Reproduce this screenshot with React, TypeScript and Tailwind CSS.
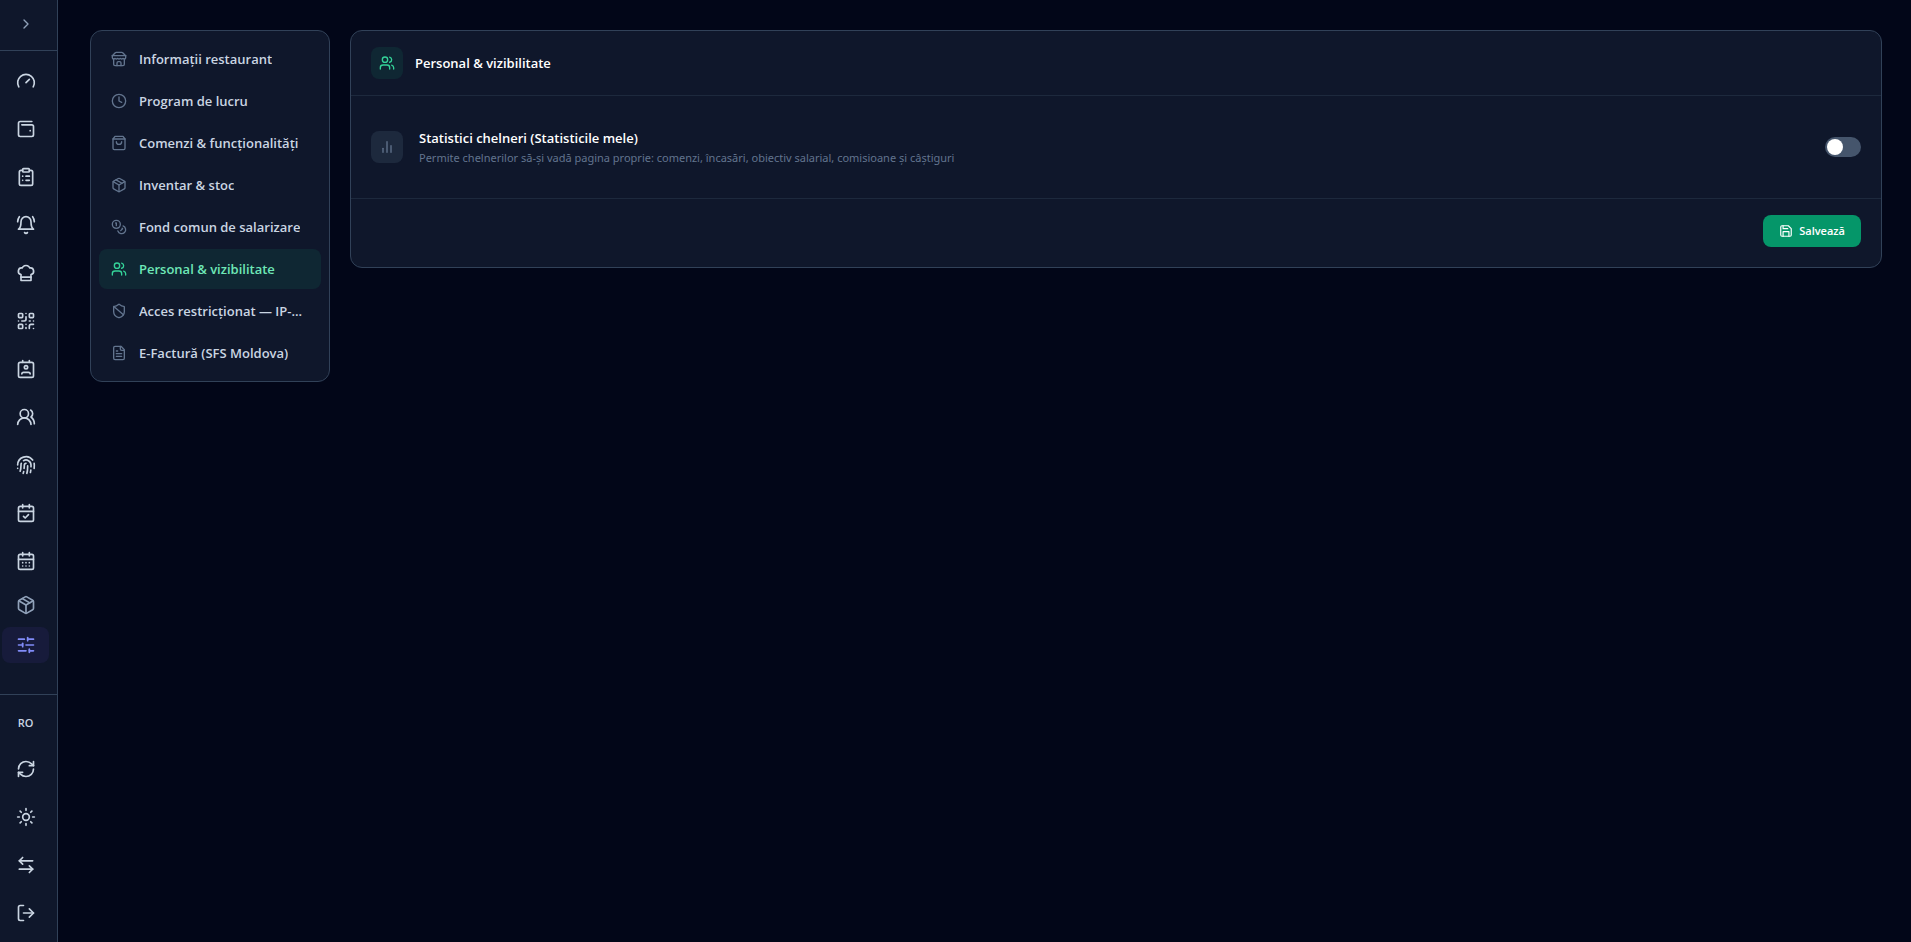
import { useState } from 'react';
import type { ReactNode } from 'react';
import {
  ArrowLeftRight, CalendarCheck, CalendarDays, ChevronRight, ClipboardList, Clock, Coins, Fingerprint,
  Gauge, LogOut, Package, QrCode, RefreshCw, ShieldBan, SlidersHorizontal, Sun, Users, UsersRound,
  WalletMinimal,
} from 'lucide-react';

interface IconProps { size?: number; className?: string }
type IconType = (props: IconProps) => ReactNode;
interface RailItem { label: string; icon: React.ComponentType<IconProps> }
interface Section { id: string; label: string; icon: React.ComponentType<IconProps> }

// Stroke icons that lucide has no matching shape for
function strokeIcon(...paths: string[]): IconType {
  return function StrokeIcon({ size = 24, className }: IconProps) {
    return (
      <svg
        width={size}
        height={size}
        viewBox="0 0 24 24"
        fill="none"
        stroke="currentColor"
        strokeWidth={2}
        strokeLinecap="round"
        strokeLinejoin="round"
        className={className}
        aria-hidden="true"
      >
        {paths.map((d) => <path key={d} d={d} />)}
      </svg>
    );
  };
}

const Bell = strokeIcon(
  'M6 8a6 6 0 0 1 12 0c0 7 3 9 3 9H3s3-2 3-9',
  'M10.3 21a1.94 1.94 0 0 0 3.4 0',
  'M4 2C2.8 3.7 2 5.7 2 8',
  'M22 8c0-2.3-.8-4.3-2-6',
);
const Hat = strokeIcon(
  'M6 13.87A4 4 0 0 1 7.41 6a5.11 5.11 0 0 1 1.05-1.54 5 5 0 0 1 7.08 0A5.11 5.11 0 0 1 16.59 6 4 4 0 0 1 18 13.87V21H6Z',
  'M6 17h12',
);
const Badge = strokeIcon(
  'M17 18a2 2 0 0 0-2-2H9a2 2 0 0 0-2 2',
  'M5 4h14a2 2 0 0 1 2 2v14a2 2 0 0 1-2 2H5a2 2 0 0 1-2-2V6a2 2 0 0 1 2-2z',
  'M10 10a2 2 0 1 0 4 0a2 2 0 1 0-4 0',
  'M8 2v2',
  'M16 2v2',
);
const Shop = strokeIcon(
  'm2 7 4.41-4.41A2 2 0 0 1 7.83 2h8.34a2 2 0 0 1 1.42.59L22 7',
  'M4 12v8a2 2 0 0 0 2 2h12a2 2 0 0 0 2-2v-8',
  'M15 22v-4a2 2 0 0 0-2-2h-2a2 2 0 0 0-2 2v4',
  'M2 7h20',
  'M22 7v3a2 2 0 0 1-2 2a2.7 2.7 0 0 1-1.59-.63.7.7 0 0 0-.82 0A2.7 2.7 0 0 1 16 12a2.7 2.7 0 0 1-1.59-.63.7.7 0 0 0-.82 0A2.7 2.7 0 0 1 12 12a2.7 2.7 0 0 1-1.59-.63.7.7 0 0 0-.82 0A2.7 2.7 0 0 1 8 12a2.7 2.7 0 0 1-1.59-.63.7.7 0 0 0-.82 0A2.7 2.7 0 0 1 4 12a2 2 0 0 1-2-2V7',
);
const Bag = strokeIcon('M6 2 3 6v14a2 2 0 0 0 2 2h14a2 2 0 0 0 2-2V6l-3-4Z', 'M3 6h18', 'M16 10a4 4 0 0 1-8 0');
const Invoice = strokeIcon(
  'M15 2H6a2 2 0 0 0-2 2v16a2 2 0 0 0 2 2h12a2 2 0 0 0 2-2V7Z',
  'M14 2v4a2 2 0 0 0 2 2h4',
  'M10 9H8',
  'M16 13H8',
  'M16 17H8',
);
const Bars = strokeIcon('M18 20V10', 'M12 20V4', 'M6 20v-6');
const Disk = strokeIcon(
  'M19 21H5a2 2 0 0 1-2-2V5a2 2 0 0 1 2-2h11l5 5v11a2 2 0 0 1-2 2z',
  'M17 21v-8H7v8',
  'M7 3v5h8',
);

const MAIN_ITEMS: RailItem[] = [
  { label: 'Panou',      icon: Gauge },
  { label: 'Casa',       icon: WalletMinimal },
  { label: 'Comenzi',    icon: ClipboardList },
  { label: 'Notificări', icon: Bell },
  { label: 'Bucătărie',  icon: Hat },
  { label: 'Coduri QR',  icon: QrCode },
  { label: 'Contacte',   icon: Badge },
  { label: 'Personal',   icon: UsersRound },
  { label: 'Pontaj',     icon: Fingerprint },
  { label: 'Rezervări',  icon: CalendarCheck },
  { label: 'Calendar',   icon: CalendarDays },
];

const FOOTER_ITEMS: RailItem[] = [
  { label: 'Reîncarcă',          icon: RefreshCw },
  { label: 'Temă',               icon: Sun },
  { label: 'Schimbă restaurant', icon: ArrowLeftRight },
  { label: 'Ieșire',             icon: LogOut },
];

const SECTIONS: Section[] = [
  { id: 'info',      label: 'Informații restaurant',        icon: Shop },
  { id: 'hours',     label: 'Program de lucru',             icon: Clock },
  { id: 'orders',    label: 'Comenzi & funcționalități',    icon: Bag },
  { id: 'inventory', label: 'Inventar & stoc',              icon: Package },
  { id: 'fund',      label: 'Fond comun de salarizare',     icon: Coins },
  { id: 'staff',     label: 'Personal & vizibilitate',      icon: Users },
  { id: 'access',    label: 'Acces restricționat — IP-...', icon: ShieldBan },
  { id: 'efactura',  label: 'E-Factură (SFS Moldova)',      icon: Invoice },
];

function RailLink({ label, children }: { label: string; children: ReactNode }) {
  return (
    <a href="#" aria-label={label} className="flex h-11 shrink-0 items-center justify-center rounded-lg text-slate-300 hover:bg-slate-800">
      {children}
    </a>
  );
}

function Rail() {
  return (
    <aside className="sticky top-0 flex h-screen w-[58px] shrink-0 flex-col border-r border-slate-700 bg-slate-900">
      <div className="flex h-[51px] shrink-0 items-start border-b border-slate-700 pt-2 pr-[5px]">
        <button aria-label="Extinde meniul" className="flex h-8 w-full items-center justify-center text-slate-400">
          <ChevronRight size={16} />
        </button>
      </div>

      <nav className="flex min-h-0 flex-1 flex-col gap-1 overflow-hidden py-2 pr-2 pl-0.5">
        {MAIN_ITEMS.map(({ label, icon: Icon }) => (
          <RailLink key={label} label={label}><Icon size={20} /></RailLink>
        ))}
        <a href="#" aria-label="Depozit" className="flex h-9 shrink-0 items-center justify-center rounded-lg text-slate-400">
          <Package size={20} />
        </a>
        <a href="#" aria-label="Setări" aria-current="page" className="flex h-9 shrink-0 items-center justify-center rounded-lg bg-[#171b3b] text-[#818cf8]">
          <SlidersHorizontal size={20} />
        </a>
      </nav>

      <div className="flex shrink-0 flex-col gap-1 border-t border-slate-700 pt-2 pr-2 pb-[7px] pl-0.5">
        <button className="h-10 text-[11px] font-semibold text-slate-300">RO</button>
        {FOOTER_ITEMS.map(({ label, icon: Icon }) => (
          <RailLink key={label} label={label}><Icon size={20} /></RailLink>
        ))}
      </div>
    </aside>
  );
}

function SectionNav({ active, onSelect }: { active: string; onSelect: (id: string) => void }) {
  return (
    <nav className="flex w-60 shrink-0 flex-col gap-0.5 rounded-xl border border-slate-700 bg-slate-900 p-2">
      {SECTIONS.map(({ id, label, icon: Icon }) => (
        <button
          key={id}
          onClick={() => onSelect(id)}
          className={`flex h-10 items-center gap-3 rounded-lg px-3 text-left text-[13px] font-semibold ${
            id === active ? 'bg-[#10b981]/10 text-[#6ee7b7]' : 'text-slate-300 hover:bg-slate-800'
          }`}
        >
          <Icon size={16} className={`shrink-0 ${id === active ? 'text-[#34d399]' : 'text-slate-500'}`} />
          <span className="truncate pt-px">{label}</span>
        </button>
      ))}
    </nav>
  );
}

function StaffPanel() {
  const [stats, setStats] = useState(false);

  return (
    <section className="min-w-0 flex-1 rounded-xl border border-slate-700 bg-slate-900">
      <header className="flex items-center gap-3 border-b border-slate-800 px-5 py-4">
        <div className="flex size-8 items-center justify-center rounded-lg bg-[#10b981]/10 text-[#34d399]">
          <Users size={16} />
        </div>
        <h2 className="pt-px text-[13px] font-semibold text-white">Personal & vizibilitate</h2>
      </header>

      <div className="flex items-center gap-4 px-5 py-8">
        <div className="flex size-8 shrink-0 items-center justify-center rounded-lg bg-slate-800 text-slate-500">
          <Bars size={16} />
        </div>
        <div className="min-w-0 flex-1">
          <label htmlFor="waiter-stats" className="block text-[13px] leading-5 font-semibold text-white">
            Statistici chelneri (Statisticile mele)
          </label>
          <p className="mt-0.5 font-['Noto_Sans',sans-serif] text-[11px] leading-4 text-slate-500">
            Permite chelnerilor să-și vadă pagina proprie: comenzi, încasări, obiectiv salarial, comisioane și câștiguri
          </p>
        </div>
        <input
          id="waiter-stats"
          type="checkbox"
          role="switch"
          checked={stats}
          onChange={(e) => setStats(e.target.checked)}
          className="flex h-5 w-9 shrink-0 cursor-pointer appearance-none items-center rounded-full bg-slate-600 px-0.5 before:size-4 before:rounded-full before:bg-white checked:justify-end checked:bg-[#059669]"
        />
      </div>

      <footer className="flex justify-end border-t border-slate-800 px-5 pt-4 pb-5">
        <button className="flex h-8 items-center gap-1.5 rounded-lg bg-[#059669] px-4 text-[11px] font-semibold text-white hover:bg-[#10b981]">
          <Disk size={14} />
          Salvează
        </button>
      </footer>
    </section>
  );
}

export default function App() {
  const [section, setSection] = useState('staff');

  return (
    <div className="flex min-h-screen bg-slate-950 font-['Segoe_UI','Open_Sans','Noto_Sans',sans-serif]">
      <Rail />
      <main className="flex min-w-0 flex-1 items-start gap-5 py-[30px] pr-[29px] pl-8">
        <SectionNav active={section} onSelect={setSection} />
        <StaffPanel />
      </main>
    </div>
  );
}
